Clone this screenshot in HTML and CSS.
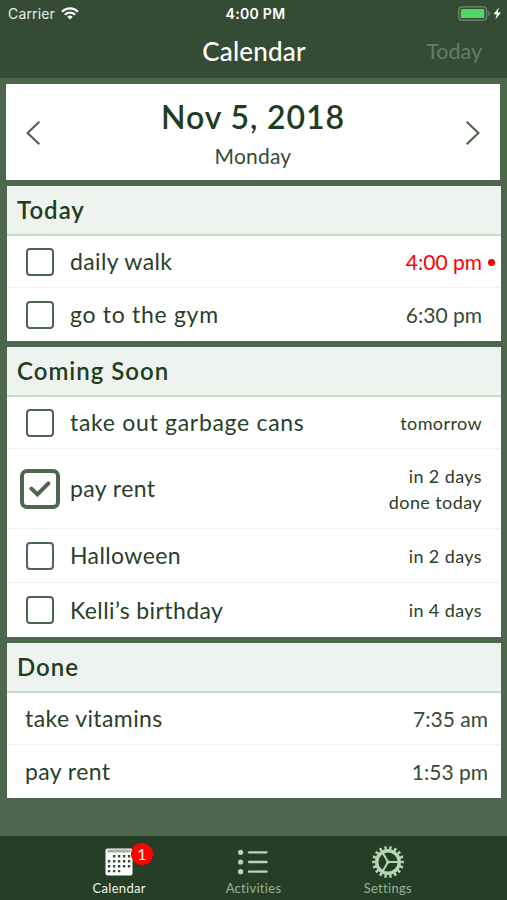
FILE: index.html
```html
<!DOCTYPE html>
<html lang="en">
<head>
    <meta charset="UTF-8">
    <meta name="viewport" content="width=device-width, initial-scale=1.0">
    <title>Calendar</title>
    <link rel="stylesheet" href="styles.css">
</head>
<body>
    <header class="top">
        <!-- Status bar -->
        <div class="status">
            <div class="carrier">
                <span>Carrier</span>
                <svg class="wifi" width="18" height="13" viewBox="0 0 18 13" fill="none" stroke="#fff" stroke-width="2.3">
                    <path d="M1 4.7a11.4 11.4 0 0 1 16 0"/>
                    <path d="M3.9 7.7a7.2 7.2 0 0 1 10.2 0"/>
                    <path d="M9 12.4L6.3 9.8a3.8 3.8 0 0 1 5.4 0z" fill="#fff" stroke="none"/>
                </svg>
            </div>
            <div class="clock">4:00 PM</div>
            <div class="battery">
                <svg width="44" height="15" viewBox="0 0 44 15">
                    <rect x=".8" y=".8" width="27.9" height="13.4" rx="3.4" fill="none" stroke="#768876" stroke-width="1.2"/>
                    <rect x="2.8" y="2.9" width="23.6" height="9.2" rx="1.2" fill="#4cd964"/>
                    <path d="M30.4 5.2c2 .8 2 3.8 0 4.6z" fill="#768876"/>
                    <path d="M41 1.3l-5.4 6.9h3.2l-1.4 5.2 5.5-7h-3.3z" fill="#fff"/>
                </svg>
            </div>
        </div>
        <!-- Navigation bar -->
        <div class="nav">
            <h1>Calendar</h1>
            <span class="nav-today">Today</span>
        </div>
    </header>

    <main>
        <div class="date-card">
            <svg class="arrow" width="16" height="26" viewBox="0 0 16 26"><path d="M14.3 1.8L2.6 13l11.7 11.2"/></svg>
            <div class="date">
                <div class="date-full">Nov 5, 2018</div>
                <div class="date-day">Monday</div>
            </div>
            <svg class="arrow" width="16" height="26" viewBox="0 0 16 26"><path d="M1.7 1.8L13.4 13 1.7 24.2"/></svg>
        </div>

        <section class="group">
            <h2>Today</h2>
            <div class="row first">
                <span class="box"></span>
                <span class="name">daily walk</span>
                <span class="time late">4:00 pm</span>
            </div>
            <div class="row">
                <span class="box"></span>
                <span class="name wide">go to the gym</span>
                <span class="time">6:30 pm</span>
            </div>
        </section>

        <section class="group soon">
            <h2>Coming Soon</h2>
            <div class="row first">
                <span class="box"></span>
                <span class="name wide">take out garbage cans</span>
                <span class="when">tomorrow</span>
            </div>
            <div class="row tall">
                <span class="box checked">
                    <svg width="22" height="16" viewBox="0 0 22 16"><path d="M2.4 7.6l6 5.8L19.4 2.4"/></svg>
                </span>
                <span class="name">pay rent</span>
                <span class="when">in 2 days<br>done today</span>
            </div>
            <div class="row">
                <span class="box"></span>
                <span class="name">Halloween</span>
                <span class="when">in 2 days</span>
            </div>
            <div class="row last">
                <span class="box"></span>
                <span class="name">Kelli’s birthday</span>
                <span class="when">in 4 days</span>
            </div>
        </section>

        <section class="group done">
            <h2>Done</h2>
            <div class="row first">
                <span class="name">take vitamins</span>
                <span class="time">7:35 am</span>
            </div>
            <div class="row">
                <span class="name">pay rent</span>
                <span class="time">1:53 pm</span>
            </div>
        </section>
    </main>

    <!-- Tab bar -->
    <nav class="tabs">
        <div class="tab active">
            <div class="tab-icon">
                <svg width="28" height="28" viewBox="0 0 28 28">
                    <rect x=".5" y=".5" width="27" height="27" rx="2" fill="#fdfffd"/>
                    <path d="M2.5 3h23" stroke="#a3b3a3" stroke-width="3"/>
                    <g fill="none" stroke="#344c34" stroke-width="2.4" stroke-dasharray="2.4 2.6">
                        <path d="M7.9 8.3h17.6"/>
                        <path d="M2.9 13.3h22.6"/>
                        <path d="M2.9 18.2h22.6"/>
                        <path d="M2.9 23.1h12.5"/>
                    </g>
                </svg>
                <span class="badge">1</span>
            </div>
            <span>Calendar</span>
        </div>
        <div class="tab">
            <div class="tab-icon">
                <svg width="32" height="28" viewBox="0 0 32 28" fill="#b4d8b4">
                    <circle cx="3.6" cy="4.3" r="2.6"/>
                    <circle cx="3.6" cy="14" r="2.6"/>
                    <circle cx="3.6" cy="23.7" r="2.6"/>
                    <path d="M12 4.3h17.6M12 14h17.6M12 23.7h17.6" stroke="#b4d8b4" stroke-width="2.3" stroke-linecap="round"/>
                </svg>
            </div>
            <span>Activities</span>
        </div>
        <div class="tab">
            <div class="tab-icon">
                <svg width="34" height="34" viewBox="-17 -17 34 34" fill="none" stroke="#b4d8b4">
                    <circle r="14.2" stroke-width="3.4" pathLength="72" stroke-dasharray="1.9 2.1" stroke-dashoffset=".95"/>
                    <circle r="11.3" stroke-width="3.4"/>
                    <path d="M0 0h11M0 0l-5.5-9.5M0 0l-5.5 9.5" stroke-width="2"/>
                    <circle r="1.7" fill="#b4d8b4" stroke="none"/>
                </svg>
            </div>
            <span>Settings</span>
        </div>
    </nav>
</body>
</html>
```

FILE: styles.css
```css
* {
    box-sizing: border-box;
}

body {
    margin: 0;
    height: 900px;
    display: flex;
    flex-direction: column;
    overflow: hidden;
    background-color: #4d674d;
    color: #294029;
    font-family: Lato, "Open Sans", sans-serif;
    font-variant-ligatures: none;
}

h1, h2 {
    margin: 0;
}

/* Header */
.top {
    height: 78px;
    background-color: #344c34;
    color: #fff;
}

.status {
    height: 27px;
    display: grid;
    grid-template-columns: 1fr auto 1fr;
    align-items: center;
    padding: 0 5px 0 8px;
    font-family: Inter, sans-serif;
    font-size: 14px;
}

.carrier {
    display: flex;
    align-items: center;
    gap: 6px;
    letter-spacing: 0.15px;
    color: #e8ede8;
}

.clock {
    padding-left: 1px;
    font-weight: 600;
    letter-spacing: 0.3px;
}

.battery {
    display: flex;
    justify-content: flex-end;
}

.nav {
    height: 48px;
    display: grid;
    grid-template-columns: 1fr auto 1fr;
    align-items: center;
    padding-right: 25px;
}

.nav h1 {
    grid-column: 2;
    padding-left: 26px;
    font-size: 26px;
    font-weight: 500;
    letter-spacing: 0.2px;
}

.nav-today {
    text-align: right;
    font-size: 21.5px;
    color: #667c66;
}

main {
    flex: 1;
    padding: 6px 6px 0 7px;
}

/* Date */
.date-card {
    height: 96px;
    margin: 0 1px 6px -1px;
    padding: 2px 19px 0;
    background-color: #fff;
    display: flex;
    justify-content: space-between;
    align-items: center;
}

.date {
    padding-top: 5px;
    text-align: center;
    color: #213d21;
}

.date-full {
    font-size: 32px;
    line-height: 40px;
    font-weight: 600;
    letter-spacing: 0.9px;
}

.date-day {
    font-size: 21px;
    line-height: 38px;
    letter-spacing: 0.2px;
    color: #344c34;
}

.arrow {
    fill: none;
    stroke: #4d674d;
    stroke-width: 2.2;
}

/* Lists */
.group {
    margin-bottom: 6px;
    background-color: #fff;
}

.group h2 {
    height: 50px;
    padding: 0 10px;
    border-bottom: 2px solid #c6dcc8;
    background-color: #eff3f0;
    font-size: 24px;
    line-height: 47px;
    font-weight: 600;
    letter-spacing: 1px;
    color: #213d21;
}

.row {
    height: 54px;
    display: flex;
    align-items: center;
    padding: 0 19px;
}

.row + .row {
    border-top: 1px solid #eef0ee;
}

.row.first {
    height: 51px;
}

.row.tall {
    height: 80px;
}

.row.last {
    height: 55px;
}

.box {
    flex: none;
    width: 28px;
    height: 28px;
    margin-right: 16px;
    border: 2px solid #4d674d;
    border-radius: 4px;
}

.box.checked {
    width: 40px;
    height: 40px;
    margin: 0 10px 0 -6px;
    border-width: 4.5px;
    border-radius: 7px;
    display: flex;
    align-items: center;
    justify-content: center;
}

.box.checked svg {
    fill: none;
    stroke: #4d674d;
    stroke-width: 4;
    stroke-linecap: round;
}

.name {
    flex: 1;
    padding-bottom: 1px;
    font-size: 23px;
    letter-spacing: 0.4px;
}

.name.wide {
    letter-spacing: 0.7px;
}

.time {
    padding-bottom: 1px;
    font-size: 21px;
    color: #344c34;
}

.time.late {
    position: relative;
    color: #f00;
}

.late::after {
    content: "";
    position: absolute;
    right: -13px;
    top: 10px;
    width: 7px;
    height: 7px;
    border-radius: 50%;
    background-color: #f00;
}

.when {
    text-align: right;
    font-size: 18px;
    line-height: 26px;
    letter-spacing: 0.4px;
}

.done .row {
    padding: 0 13px 0 18px;
}

/* Tab bar */
.tabs {
    height: 64px;
    padding: 0 52px;
    background-color: #263e26;
    display: grid;
    grid-template-columns: repeat(3, 1fr);
}

.tab {
    display: flex;
    flex-direction: column;
    align-items: center;
    font-size: 13px;
    line-height: 16px;
    letter-spacing: 0.3px;
    color: #96b596;
}

.tab.active {
    color: #eef3ee;
}

.tab-icon {
    position: relative;
    height: 34px;
    margin: 9px 0 1px;
    display: flex;
    align-items: center;
}

.badge {
    position: absolute;
    left: 26px;
    top: -2px;
    width: 22px;
    height: 22px;
    border-radius: 50%;
    background-color: #f00;
    color: #fff;
    font-size: 16px;
    line-height: 22px;
    text-align: center;
}
```
